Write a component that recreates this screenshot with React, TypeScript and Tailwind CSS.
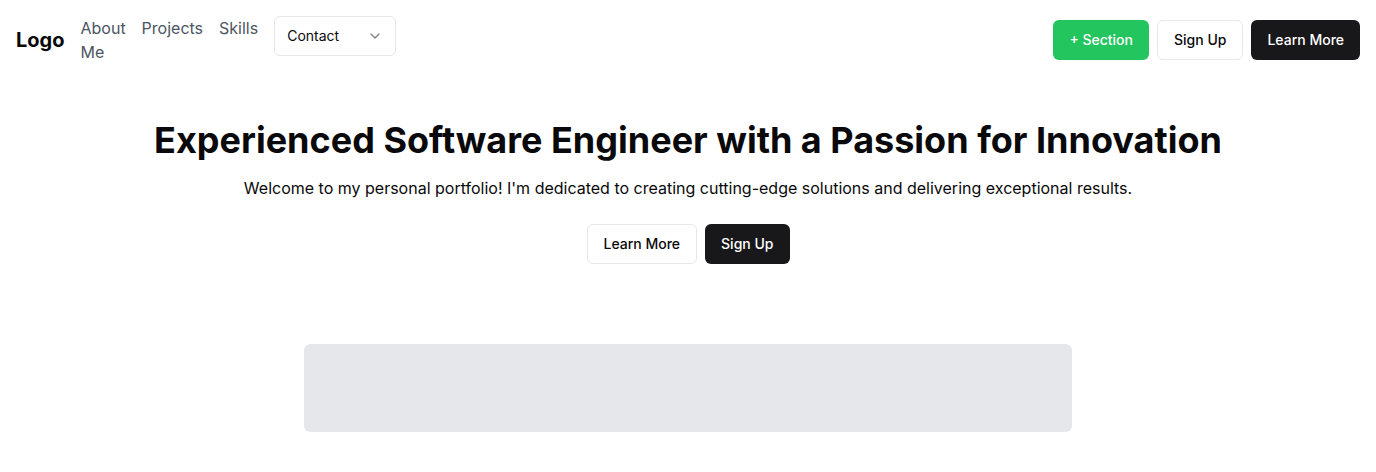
import { ChevronDown } from "lucide-react";

const App = () => {
  return (
    <div className="min-h-screen bg-white text-zinc-950 font-['Inter',sans-serif]">
      {/* ==== Header ==== */}
      <header className="flex items-center justify-between px-4 py-4">
        <div className="flex items-center gap-4">
          <span className="text-xl font-bold">Logo</span>
          <nav className="flex items-start gap-4">
            <a className="w-min text-base leading-6 text-[#4b5563]" href="#">
              About Me
            </a>
            <a className="text-base leading-6 text-[#4b5563]" href="#">
              Projects
            </a>
            <a className="text-base leading-6 text-[#4b5563]" href="#">
              Skills
            </a>
            <button className="flex h-10 w-[122px] items-center justify-between rounded-md border border-gray-200 bg-white px-3 text-sm">
              <span>Contact</span>
              <ChevronDown className="h-4 w-4 opacity-50" />
            </button>
          </nav>
        </div>
        <div className="flex items-center gap-2">
          <button className="h-10 rounded-md bg-[#22c55e] px-4 text-sm font-medium text-white">
            + Section
          </button>
          <button className="h-10 rounded-md border border-gray-200 bg-white px-4 text-sm font-medium">
            Sign Up
          </button>
          <button className="h-10 rounded-md bg-[#18181b] px-4 text-sm font-medium text-white">
            Learn More
          </button>
        </div>
      </header>

      {/* ==== Hero ==== */}
      <section className="flex flex-col items-center pt-10 text-center">
        <h1 className="text-4xl font-bold">
          Experienced Software Engineer with a Passion for Innovation
        </h1>
        <p className="mt-4 text-base leading-6">
          Welcome to my personal portfolio! I'm dedicated to creating cutting-edge solutions and
          delivering exceptional results.
        </p>
        <div className="mt-6 flex gap-2">
          <button className="h-10 rounded-md border border-gray-200 bg-white px-4 text-sm font-medium">
            Learn More
          </button>
          <button className="h-10 rounded-md bg-[#18181b] px-4 text-sm font-medium text-white">
            Sign Up
          </button>
        </div>
      </section>

      {/* ==== Placeholder ==== */}
      <section className="flex justify-center pt-20">
        <div className="h-[88px] w-full max-w-3xl rounded-md bg-gray-200" />
      </section>
    </div>
  );
};

export default App;
